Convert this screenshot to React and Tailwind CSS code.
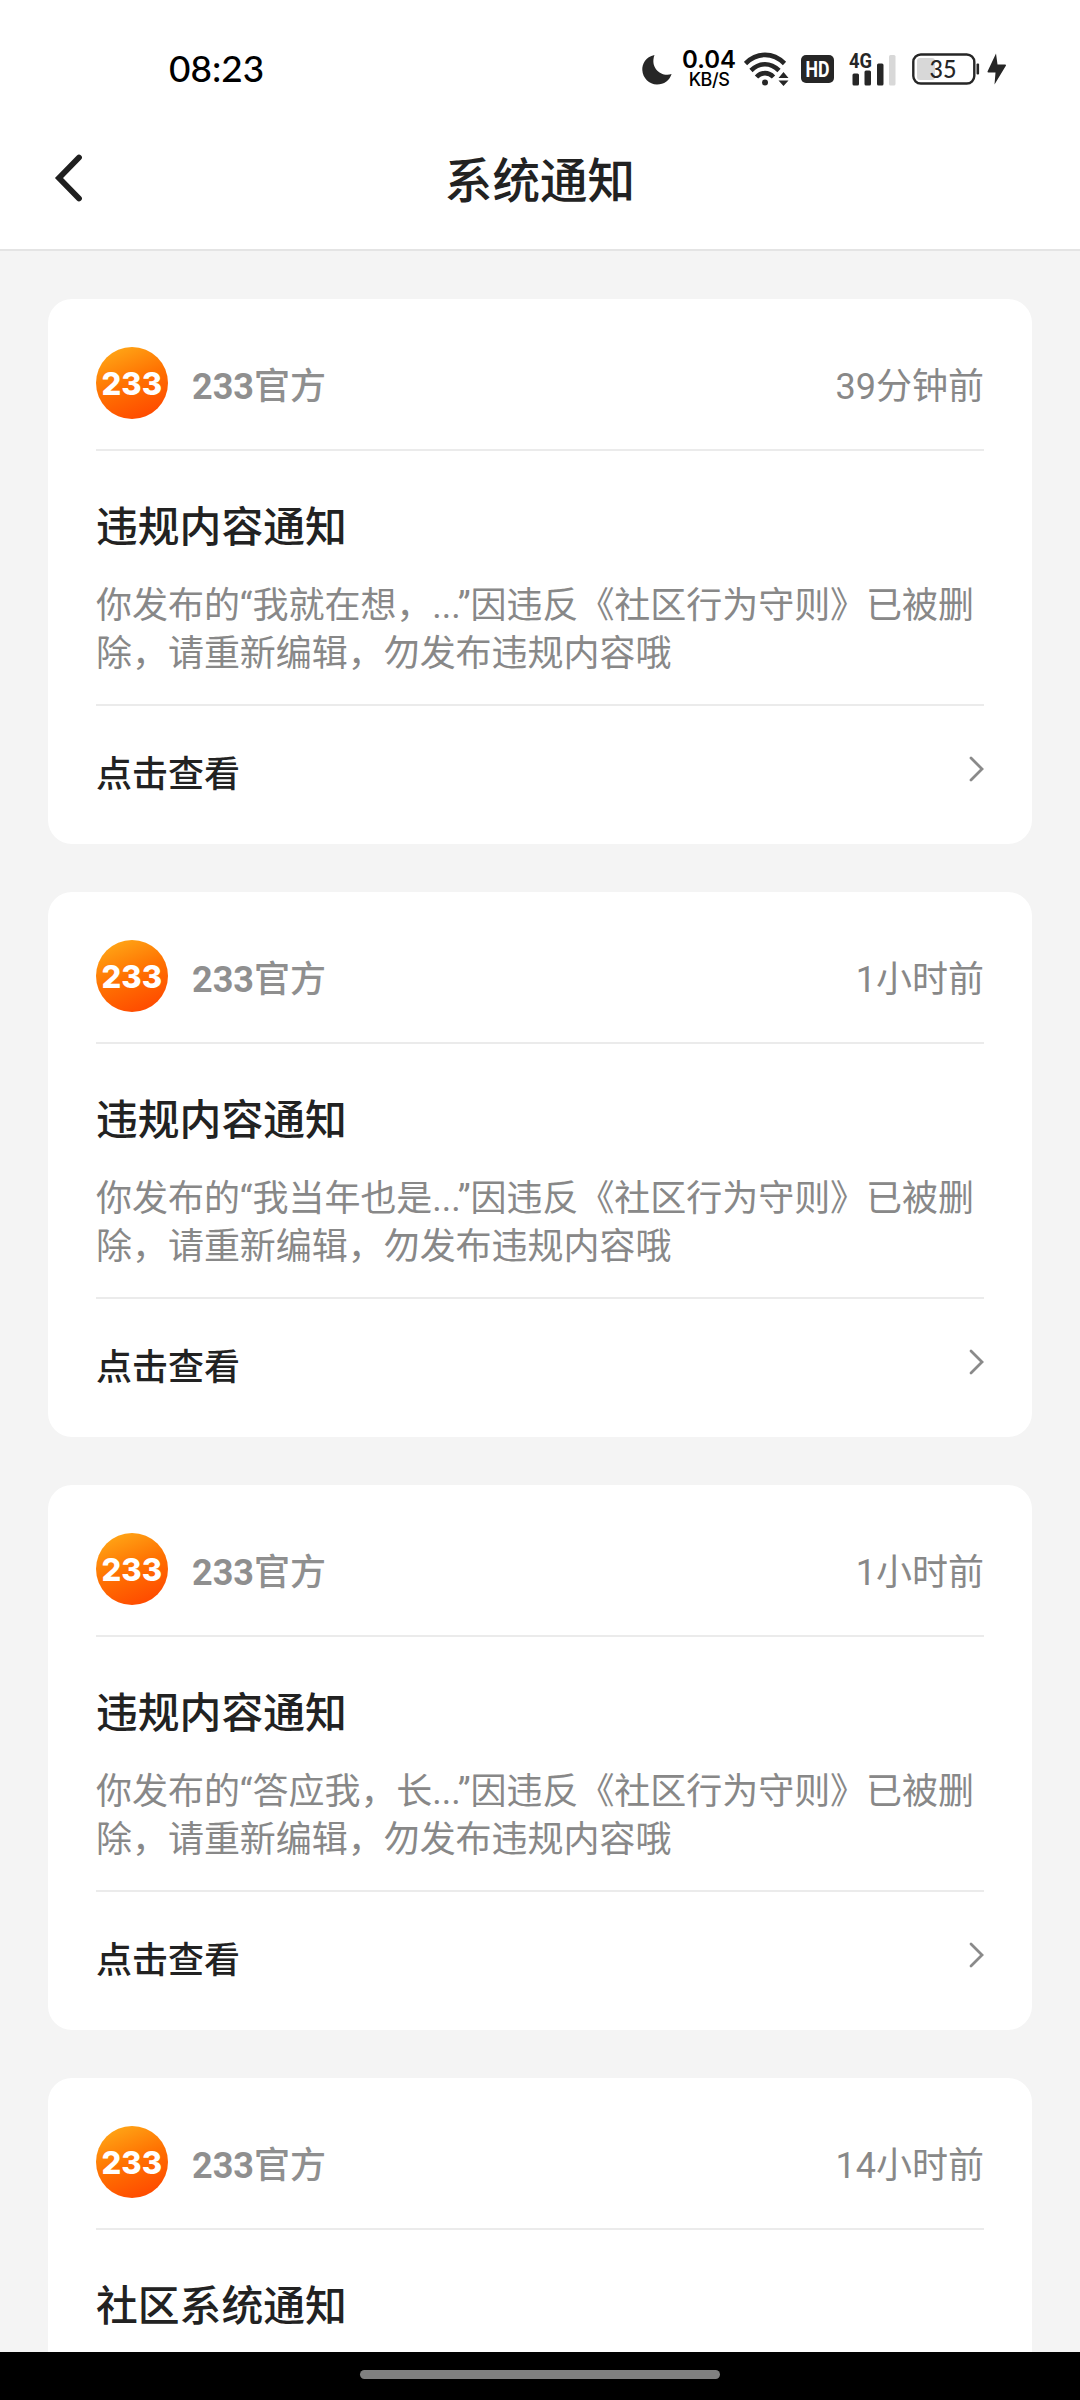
const notices = [
  { time: "39分钟前", title: "违规内容通知", quote: "我就在想，..." },
  { time: "1小时前", title: "违规内容通知", quote: "我当年也是..." },
  { time: "1小时前", title: "违规内容通知", quote: "答应我，长..." },
  { time: "14小时前", title: "社区系统通知", quote: "" },
]

const MoonIcon = () => (
  <svg className="h-[31px] w-[30px]" viewBox="0 0 30 31" fill="#262626">
    <path d="M12.5 1C3.5 3 0 10 0.3 16C0.8 24 7 30.5 15 30.5C22 30.5 27.5 26.5 29.6 20C20 23.5 7.5 14.5 12.5 1Z" />
  </svg>
)

const WifiIcon = () => (
  <svg className="ml-[8px] h-[34px] w-[46px]" viewBox="0 0 46 34" fill="none" stroke="#262626" strokeWidth="4.6">
    <path d="M1.5 11.5C13 0 29 0 40.5 11.5" />
    <path d="M7 18.5C15.5 10.2 26.5 10.2 35 18.5" />
    <path d="M12.5 25C17.5 19.8 24.5 19.8 29.5 25" />
    <circle cx="21" cy="30.5" r="3" fill="#262626" stroke="none" />
    <path d="M34.5 26L39.5 20L44.5 26ZM34.5 28.5L39.5 34L44.5 28.5Z" fill="#262626" stroke="none" />
  </svg>
)

const SignalIcon = () => (
  <svg className="ml-[15px] h-[36px] w-[47px]" viewBox="0 -1 47 36" fill="#262626">
    <text x="0" y="15.5" textLength="23" lengthAdjust="spacingAndGlyphs" fontSize="21" fontWeight="700" fontFamily="Roboto, sans-serif">
      4G
    </text>
    <rect x="3.5" y="21.5" width="6.5" height="12" rx="1.5" />
    <rect x="15.5" y="18.5" width="6.5" height="15" rx="1.5" />
    <rect x="28" y="11.5" width="6.5" height="22" rx="1.5" />
    <rect x="40" y="3" width="6.5" height="30.5" rx="1.5" fill="#d8d8d8" />
  </svg>
)

const BatteryIcon = () => (
  <svg className="ml-[16px] h-[32px] w-[68px]" viewBox="0 0 68 32">
    <rect x="5" y="5" width="18" height="22" rx="3" fill="#d8d8d8" />
    <rect x="1.3" y="1.5" width="61" height="29" rx="7.5" fill="none" stroke="#262626" strokeWidth="2.4" />
    <rect x="64.5" y="10.5" width="2.6" height="11" rx="1" fill="#262626" />
    <text x="17.5" y="24.5" textLength="27" lengthAdjust="spacingAndGlyphs" fill="#262626" fontSize="24" fontWeight="500" fontFamily="Lato, sans-serif">
      35
    </text>
  </svg>
)

const BoltIcon = () => (
  <svg className="ml-[7px] h-[32px] w-[20px]" viewBox="0 0 20 32" fill="#262626">
    <path d="M9 0.5L0.5 18.5Q0.3 19.5 1.5 19.5H8.5L7.5 31.5L19 12.5Q19.2 11.5 18 11.5H10.5Z" />
  </svg>
)

const StatusBar = () => (
  <div className="flex h-[138px] items-center pl-[169px] pr-[73px]">
    <span className="mb-[3px] font-['Lato',sans-serif] text-[37px] font-medium leading-none text-black">08:23</span>
    <div className="ml-auto flex items-center font-['Inter',sans-serif]">
      <MoonIcon />
      <div className="ml-[10px] flex w-[54px] flex-col items-center text-black">
        <span className="text-[24px] font-semibold leading-[21px]">0.04</span>
        <span className="text-[18px] font-medium leading-[19px] tracking-tight">KB/S</span>
      </div>
      <WifiIcon />
      <svg className="ml-[11px] h-[28px] w-[33px]" viewBox="0 0 33 28">
        <rect width="33" height="28" rx="5" fill="#262626" />
        <text x="4.5" y="22" textLength="24" lengthAdjust="spacingAndGlyphs" fill="#fff" fontSize="22" fontWeight="700" fontFamily="Roboto, sans-serif">
          HD
        </text>
      </svg>
      <SignalIcon />
      <BatteryIcon />
      <BoltIcon />
    </div>
  </div>
)

const Logo = () => (
  <svg className="size-[72px]" viewBox="0 0 72 72">
    <defs>
      <linearGradient id="logo" x1="0.15" y1="0.05" x2="0.55" y2="1">
        <stop offset="0" stopColor="#ffa616" />
        <stop offset="0.5" stopColor="#ff7302" />
        <stop offset="1" stopColor="#ff4d00" />
      </linearGradient>
    </defs>
    <circle cx="36" cy="36" r="36" fill="url(#logo)" />
    <text x="5.5" y="47.5" textLength="60.5" lengthAdjust="spacingAndGlyphs" fill="#fff" fontSize="31.5" fontWeight="800" fontFamily="Inter, sans-serif">
      233
    </text>
  </svg>
)

const NoticeCard = ({ notice }) => (
  <div className="h-[545px] shrink-0 rounded-3xl bg-white px-12">
    <div className="flex h-[152px] items-center border-b-2 border-[#ebebeb] pt-[18px]">
      <Logo />
      <span className="ml-6 pt-[7px] text-[36px] font-medium text-[#8f8f8f]">
        <b>233</b>官方
      </span>
      <span className="ml-auto pt-[7px] text-[36px] text-[#888]">{notice.time}</span>
    </div>
    <div className="h-[255px] border-b-2 border-[#ebebeb] pt-[47px]">
      <h2 className="text-[41.8px] font-medium leading-[60px] text-[#222]">{notice.title}</h2>
      {notice.quote && (
        <p className="mt-[24px] text-[36px] leading-[48px] tracking-[-0.04px] text-[#888]">
          {`你发布的“${notice.quote}”因违反《社区行为守则》已被删除，请重新编辑，勿发布违规内容哦`}
        </p>
      )}
    </div>
    <div className="flex h-[138px] items-center justify-between">
      <span className="text-[36px] font-medium text-[#222]">点击查看</span>
      <svg className="mb-3 h-[26px] w-[15px]" viewBox="0 0 15 26" fill="none" stroke="#8a8a8a" strokeWidth="2.8" strokeLinecap="round">
        <path d="M2 2L13 13L2 24" />
      </svg>
    </div>
  </div>
)

const App = () => {
  return (
    <div className="flex h-[2400px] w-[1080px] flex-col overflow-hidden bg-[#f4f4f4] font-['Roboto','Noto_Sans_CJK_SC',sans-serif]">
      <div className="h-[251px] shrink-0 border-b-2 border-[#e4e4e4] bg-white">
        <StatusBar />
        <div className="flex h-[84px] items-center px-[54px]">
          <svg className="mb-1 h-[48px] w-[28px]" viewBox="0 0 28 48" fill="none" stroke="#1f1f1f" strokeWidth="5.8" strokeLinecap="round">
            <path d="M25 3.5L5 24L25 44.5" />
          </svg>
          <h1 className="grow pr-7 pt-[5px] text-center text-[47.6px] font-medium text-[#222]">系统通知</h1>
        </div>
      </div>
      <div className="flex min-h-0 grow flex-col gap-12 overflow-hidden px-12 pt-12">
        {notices.map((notice, index) => (
          <NoticeCard key={index} notice={notice} />
        ))}
      </div>
      <div className="flex h-12 shrink-0 justify-center bg-black pt-[18px]">
        <div className="h-[9px] w-[360px] rounded-full bg-[#808080]" />
      </div>
    </div>
  )
}

export default App
